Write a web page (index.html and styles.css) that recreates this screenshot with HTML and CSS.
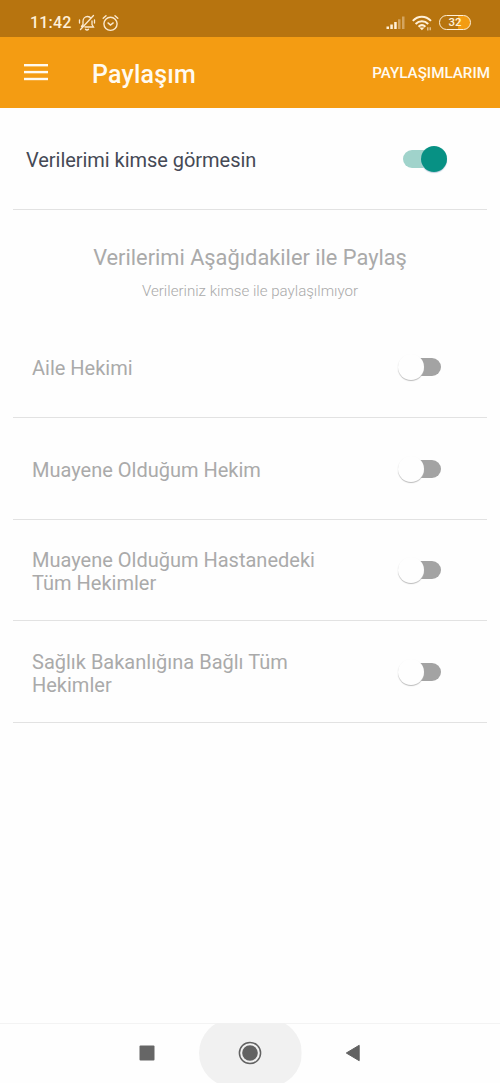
FILE: index.html
```html
<!DOCTYPE html>
<html lang="tr">
<head>
<meta charset="utf-8">
<title>Paylaşım</title>
<link rel="stylesheet" href="styles.css">
</head>
<body>
<div class="screen">
  <div class="status">
    <span class="clock">11:42</span>
    <svg class="bell" width="18" height="18" viewBox="0 0 18 18" fill="none" stroke="#fbe9cf" stroke-width="1.3" stroke-linecap="round">
      <path d="M3.5 12.5 5 10.5V7.5C5 4.5 7 2.5 9.5 2.5 11 2.5 12.3 3.2 13 4.4M14 7v3.5l1.5 2.5H7M7.5 15.3c.8.9 2.2.9 3 0M15.5 1.5 2.5 15.5M1.5 6v3M16.5 6v3"/>
    </svg>
    <svg class="alarm" width="17" height="18" viewBox="0 0 17 18" fill="none" stroke="#fbe9cf" stroke-width="1.4" stroke-linecap="round">
      <circle cx="8.5" cy="9.8" r="6.6"/><path d="M1.2 4.2 4 1.7M15.8 4.2 13 1.7M6 8.9l2.5 2.2L11.2 8.9"/>
    </svg>
    <span class="spacer"></span>
    <svg class="signal" width="20" height="14" viewBox="0 0 20 14" fill="#fff0d8">
      <rect x="0.5" y="10.5" width="2.5" height="2.5"/><rect x="4.3" y="8.5" width="2.5" height="4.5"/><rect x="8.2" y="6" width="2.5" height="7"/><rect x="12" y="3.3" width="2.5" height="9.7" opacity=".4"/><rect x="16" y="0.5" width="2.5" height="12.5" opacity=".4"/>
    </svg>
    <svg class="wifi" width="20" height="17" viewBox="0 0 20 17" fill="none" stroke="#fff0d8" stroke-width="2">
      <path d="M.8 5.9C6 .4 13.6.4 19 5.9M3.6 9c3.7-3.7 8.9-3.7 12.6 0M6.5 11.8c2.1-2 4.8-2 6.9 0"/><path d="M7.3 12.4h5.2l-2.6 2.8z" fill="#fff0d8" stroke="none"/><path d="M15.8 12.3v3.2M18.2 12.3v3" stroke-width="1.3" opacity=".7"/>
    </svg>
    <span class="battery">32</span>
  </div>
  <header class="appbar">
    <svg class="menu" width="24" height="18" viewBox="0 0 24 18" fill="#fffaf0"><rect y="1" width="24" height="2.4"/><rect y="7.9" width="24" height="2.4"/><rect y="14.8" width="24" height="2.4"/></svg>
    <h1 class="title">Paylaşım</h1>
    <span class="action">PAYLAŞIMLARIM</span>
  </header>
  <main class="content">
    <div class="row primary"><span class="label">Verilerimi kimse görmesin</span><span class="switch on"><i class="thumb"></i></span></div>
    <div class="heading">
      <h2 class="heading-title">Verilerimi Aşağıdakiler ile Paylaş</h2>
      <p class="heading-note">Verileriniz kimse ile paylaşılmıyor</p>
    </div>
    <div class="row"><span class="label">Aile Hekimi</span><span class="switch"><i class="thumb"></i></span></div>
    <div class="row"><span class="label">Muayene Olduğum Hekim</span><span class="switch"><i class="thumb"></i></span></div>
    <div class="row"><span class="label">Muayene Olduğum Hastanedeki<br>Tüm Hekimler</span><span class="switch"><i class="thumb"></i></span></div>
    <div class="row"><span class="label">Sağlık Bakanlığına Bağlı Tüm<br>Hekimler</span><span class="switch"><i class="thumb"></i></span></div>
  </main>
  <nav class="nav">
    <span class="key"><svg width="16" height="16" viewBox="0 0 16 16"><rect x=".5" y=".5" width="15" height="15" rx="1" fill="#666"/></svg></span>
    <span class="key home"><svg width="24" height="24" viewBox="0 0 24 24"><circle cx="12" cy="12" r="10.6" fill="none" stroke="#626262" stroke-width="1.5"/><circle cx="12" cy="12" r="7.8" fill="#626262"/></svg></span>
    <span class="key"><svg width="16" height="18" viewBox="0 0 16 18"><path d="M14.2 1.3v15.4L1.3 9z" fill="#626262" stroke="#626262" stroke-linejoin="round"/></svg></span>
  </nav>
</div>
</body>
</html>
```
FILE: styles.css
```css
* { box-sizing: border-box; margin: 0; padding: 0; }
body { background: #fefefe; font-family: Roboto, "Noto Sans", sans-serif; }
.screen { width: 500px; height: 1083px; display: flex; flex-direction: column; overflow: hidden; }
.status { height: 37px; background: #b7740f; display: flex; align-items: center; padding: 9px 29px 0 30px; }
.clock { font-size: 16px; line-height: 20px; font-weight: 500; color: #fff0d8; width: 48px; letter-spacing: .2px; }
.alarm { margin: -1px 0 0 6px; }
.spacer { flex: 1; }
.signal { margin-right: 6px; }
.wifi { margin-right: 7px; }
.battery { width: 32px; height: 15px; margin-top: -1px; border: 1.5px solid #fff0d8; border-radius: 8px; background: linear-gradient(90deg, transparent 60%, #f39c12 60%); color: #fff0d8; font-size: 11.5px; line-height: 13px; font-weight: 500; text-align: center; }
.appbar { height: 71px; background: #f49c12; display: flex; align-items: center; padding: 0 10px 0 24px; color: #fffaf0; }
.menu { margin-top: -2px; }
.title { margin-left: 44px; font-size: 25px; letter-spacing: .2px; font-weight: 500; line-height: 30px; margin-top: 5px; flex: 1; }
.action { font-size: 15.2px; line-height: 20px; font-weight: 500; margin-top: 1px; }
.content { flex: 1; padding: 0 13px; }
.row { height: 101.7px; display: flex; align-items: center; justify-content: space-between; border-bottom: 1.5px solid #e2e2e2; padding: 1px 46px 0 19px; font-size: 20px; line-height: 23px; color: #aaa; }
.label { margin-top: 3px; }
.primary { height: 102px; padding: 1px 40px 0 13px; color: #454955; }
.primary .label { letter-spacing: -.04px; }
.heading { height: 106.2px; padding-top: 34px; text-align: center; color: #aaa; }
.heading-title { font-size: 21.8px; font-weight: 400; line-height: 28px; }
.heading-note { font-size: 15.1px; font-weight: 300; line-height: 20px; margin-top: 9px; }
.switch { position: relative; width: 38px; height: 18px; border-radius: 9px; background: #a3a3a3; }
.thumb { position: absolute; left: -5px; top: -4px; width: 26px; height: 26px; border-radius: 50%; background: #fefefe; box-shadow: 0 1px 1px #bbb; }
.on { width: 44px; background: #a0d3cb; }
.on .thumb { left: 18px; background: #079184; box-shadow: 0 1px 1px #bcd; }
.nav { height: 60px; border-top: 1px solid #f3f3f3; display: grid; grid-template-columns: 103px 103px 103px; grid-template-rows: 58px; justify-content: center; }
.key { display: flex; align-items: center; justify-content: center; }
.key:first-child, .key:last-child { padding-right: 1px; }
.home { background: #f1f1f1; border-radius: 36px; height: 68px; margin-top: -5px; clip-path: inset(4px 0 4px 0); }
```
